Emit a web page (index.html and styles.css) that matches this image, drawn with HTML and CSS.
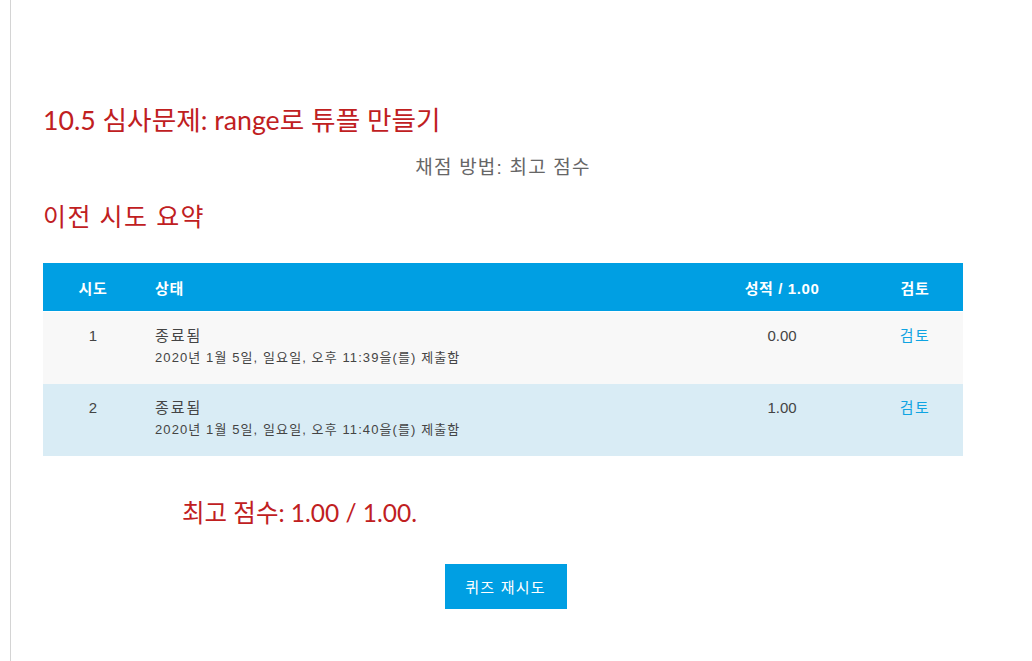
FILE: index.html
```html
<!DOCTYPE html>
<html lang="ko">
<head>
<meta charset="utf-8">
<link rel="stylesheet" href="styles.css">
</head>
<body>
<div class="page">
  <div class="content">
    <h2 class="title">10.5 심사문제: range로 튜플 만들기</h2>
    <p class="grading">채점 방법: 최고 점수</p>
    <h3 class="summary">이전 시도 요약</h3>
    <table class="attempts">
      <colgroup>
        <col class="c-num"><col class="c-state"><col class="c-grade"><col class="c-review">
      </colgroup>
      <thead>
        <tr>
          <th class="center">시도</th>
          <th class="left">상태</th>
          <th class="center">성적 / 1.00</th>
          <th class="center">검토</th>
        </tr>
      </thead>
      <tbody>
        <tr class="odd">
          <td class="center">1</td>
          <td class="left"><span class="state">종료됨</span><span class="date">2020년 1월 5일, 일요일, 오후 11:39을(를) 제출함</span></td>
          <td class="center">0.00</td>
          <td class="center"><a href="#">검토</a></td>
        </tr>
        <tr class="even">
          <td class="center">2</td>
          <td class="left"><span class="state">종료됨</span><span class="date">2020년 1월 5일, 일요일, 오후 11:40을(를) 제출함</span></td>
          <td class="center">1.00</td>
          <td class="center"><a href="#">검토</a></td>
        </tr>
      </tbody>
    </table>
    <p class="best">최고 점수: 1.00 / 1.00.</p>
    <div class="actions"><button class="retry">퀴즈 재시도</button></div>
  </div>
</div>
</body>
</html>
```
FILE: styles.css
```css
html, body {
  margin: 0;
  padding: 0;
  background: #fff;
  height: 100%;
}
body {
  font-family: "Liberation Sans", Arial, "Noto Sans CJK KR", sans-serif;
  color: #444;
}
.page {
  margin-left: 10px;
  border-left: 1px solid #d4d4d4;
  min-height: 100%;
  box-sizing: border-box;
  padding: 104px 0 0 32px;
}
.content {
  width: 920px;
}
.title {
  margin: 0;
  font-family: Lato, "Noto Sans CJK KR", sans-serif;
  font-weight: 400;
  font-size: 26.7px;
  line-height: 32px;
  color: #c0201f;
}
.grading {
  margin: 19px 0 0;
  text-align: center;
  font-size: 19px;
  letter-spacing: 1.2px;
  line-height: 26px;
  color: #666;
}
.summary {
  margin: 20px 0 0;
  font-family: Lato, "Noto Sans CJK KR", sans-serif;
  font-weight: 400;
  font-size: 25px;
  letter-spacing: 1.4px;
  line-height: 30px;
  color: #c0201f;
}
.attempts {
  margin-top: 32px;
  width: 920px;
  border-collapse: collapse;
  table-layout: fixed;
}
.c-num { width: 100px; }
.c-state { width: 554px; }
.c-grade { width: 170px; }
.c-review { width: 96px; }
.attempts th {
  background: #009fe3;
  color: #fff;
  font-weight: 700;
  font-size: 15px;
  letter-spacing: 0.6px;
  height: 48px;
  padding: 0 12px;
  border-bottom: 1px solid #fff;
}
.attempts td {
  vertical-align: top;
  font-size: 15px;
  line-height: 20px;
  padding: 14px 12px 0;
  height: 72px;
  box-sizing: border-box;
}
.center { text-align: center; }
.left { text-align: left; }
tr.odd td { background: #f8f8f8; }
tr.even td { background: #d9ecf5; }
.state {
  display: block;
  letter-spacing: 2px;
}
.date {
  display: block;
  font-size: 13px;
  letter-spacing: 1.1px;
  line-height: 20px;
  margin-top: 2px;
}
.attempts a {
  color: #0ea4e2;
  text-decoration: none;
  letter-spacing: 1.5px;
}
.best {
  margin: 42px 0 0 139px;
  font-family: Lato, "Noto Sans CJK KR", sans-serif;
  font-size: 24.5px;
  line-height: 30px;
  color: #c0201f;
}
.actions {
  display: flex;
  justify-content: center;
  margin-top: 36px;
}
.retry {
  background: #009fe3;
  color: #fff;
  border: none;
  font-family: "Liberation Sans", Arial, "Noto Sans CJK KR", sans-serif;
  font-size: 15px;
  letter-spacing: 1.2px;
  width: 122px;
  height: 45px;
  margin-left: 5px;
}
```
